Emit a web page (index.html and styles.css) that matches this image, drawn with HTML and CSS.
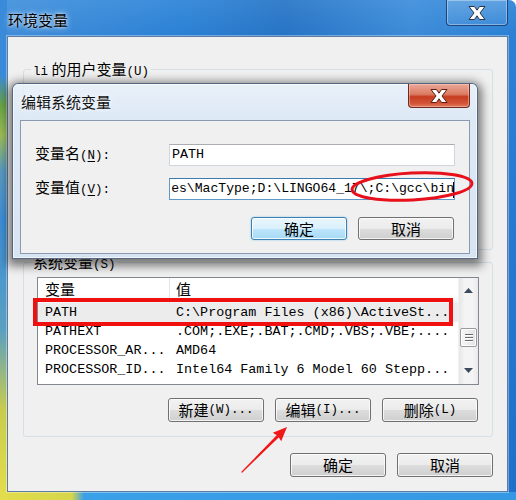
FILE: index.html
```html
<!DOCTYPE html>
<html lang="zh-CN">
<head>
<meta charset="utf-8">
<title>环境变量</title>
<link rel="stylesheet" href="styles.css">
</head>
<body>
<div class="win">
  <div class="titlebar">
    <span class="title">环境变量</span>
    <div class="close glass">
      <svg width="22" height="16" viewBox="0 0 22 16"><path d="M3 1.5 H8.5 L11 5.2 L13.5 1.5 H19 L14 8 L19 14.5 H13.5 L11 10.8 L8.5 14.5 H3 L8 8 Z" fill="#fff" stroke="#2b3440" stroke-width="1" stroke-linejoin="round"/></svg>
    </div>
  </div>
  <div class="client">
    <fieldset class="group user">
      <legend><span class="a">li</span> 的用户变量<span class="a">(U)</span></legend>
      <div class="user-body"></div>
    </fieldset>
    <fieldset class="group sys">
      <legend>系统变量<span class="a">(S)</span></legend>
      <div class="list">
        <div class="table">
          <div class="thead"><div class="c1">变量</div><div class="c2">值</div></div>
          <div class="row sel"><div class="c1">PATH</div><div class="c2">C:\Program Files (x86)\ActiveSt...</div></div>
          <div class="row"><div class="c1">PATHEXT</div><div class="c2">.COM;.EXE;.BAT;.CMD;.VBS;.VBE;....</div></div>
          <div class="row"><div class="c1">PROCESSOR_AR...</div><div class="c2">AMD64</div></div>
          <div class="row"><div class="c1">PROCESSOR_ID...</div><div class="c2">Intel64 Family 6 Model 60 Stepp...</div></div>
        </div>
        <div class="vscroll">
          <div class="arr up"><svg width="9" height="5" viewBox="0 0 9 5"><path d="M0 5 L4.5 0 L9 5 Z" fill="#3c4a5e"/></svg></div>
          <div class="thumb"><span></span><span></span><span></span></div>
          <div class="spacer"></div>
          <div class="arr down"><svg width="9" height="5" viewBox="0 0 9 5"><path d="M0 0 L4.5 5 L9 0 Z" fill="#3c4a5e"/></svg></div>
        </div>
      </div>
      <div class="btnrow">
        <div class="btn">新建<span class="a">(W)...</span></div>
        <div class="btn">编辑<span class="a">(I)...</span></div>
        <div class="btn">删除<span class="a">(L)</span></div>
      </div>
    </fieldset>
    <div class="btnrow bottom">
      <div class="btn">确定</div>
      <div class="btn">取消</div>
    </div>
  </div>

  <div class="dialog">
    <div class="dtitlebar">
      <span class="dtitle">编辑系统变量</span>
      <div class="dclose">
        <svg width="22" height="16" viewBox="0 0 22 16"><path d="M3 1.5 H8.5 L11 5.2 L13.5 1.5 H19 L14 8 L19 14.5 H13.5 L11 10.8 L8.5 14.5 H3 L8 8 Z" fill="#fff" stroke="#5a1e14" stroke-width="1" stroke-linejoin="round"/></svg>
      </div>
    </div>
    <div class="dclient">
      <div class="form">
        <div class="label">变量名<span class="a">(<u>N</u>):</span></div>
        <div class="input"><span class="val">PATH</span></div>
        <div class="label">变量值<span class="a">(<u>V</u>):</span></div>
        <div class="input focus"><span class="val caret">es\MacType;D:\LINGO64_17\;C:\gcc\bin</span></div>
      </div>
      <div class="btnrow dbtns">
        <div class="btn def">确定</div>
        <div class="btn">取消</div>
      </div>
    </div>
  </div>

  <svg class="marks" width="516" height="500" viewBox="0 0 516 500">
    <ellipse cx="412" cy="186.5" rx="60" ry="13.5" fill="none" stroke="#e8101a" stroke-width="3" transform="rotate(-3 412 186.5)"/>
    <rect x="35" y="300" width="416" height="24" fill="none" stroke="#f01010" stroke-width="4"/>
    <path d="M242 472 L278.5 434.2 L279.8 435.5 Z" fill="#f01818" stroke="#f01818" stroke-width="1.2" stroke-linejoin="round"/>
    <path d="M287 427 L281.2 441.2 L278 436 L272.8 432.8 Z" fill="#f01818"/>
  </svg>
</div>
</body>
</html>
```

FILE: styles.css
```css
* { box-sizing: border-box; }
html, body { margin: 0; padding: 0; }
body {
  width: 516px;
  height: 500px;
  overflow: hidden;
  background: #ffffff;
  font-family: "Noto Sans CJK SC", "Noto Sans", sans-serif;
  font-size: 15px;
  color: #000;
}
.a { font-family: "Liberation Mono", "DejaVu Sans Mono", monospace; font-size: 12.5px; }
u { text-decoration: underline; text-underline-offset: 2px; }

.win {
  position: relative;
  width: 516px;
  height: 500px;
  display: flex;
  flex-direction: column;
  padding: 0 8px 8px 7px;
  border-radius: 0 7px 0 0;
  background:
    linear-gradient(180deg, #3a8ada 0, #3a8ada 75px, #6aa548 105px, #9dbe55 135px, #5c9bc0 170px, #3d8fd8 220px, #5aa0c0 330px, #c9cc4c 410px, #e4de4c 500px) left top / 7px 100% no-repeat,
    linear-gradient(90deg, #e2dc4a 0, #d6d64c 72px, #3aa0e8 84px, #3598e4 100%) left bottom / 100% 8px no-repeat,
    linear-gradient(90deg, rgba(255,255,255,.10), rgba(255,255,255,0) 35%, rgba(0,0,60,.10) 55%, rgba(255,255,255,.08) 80%, rgba(255,255,255,0)),
    linear-gradient(180deg, #3b8ddb 0, #2b80d4 36px, #1f6fc9 100%);
}

.titlebar {
  height: 36px;
  flex: none;
  display: flex;
  justify-content: space-between;
  align-items: flex-start;
}
.title {
  padding: 10px 0 0 1px;
  line-height: 20px;
  font-size: 15px;
  color: #000;
  text-shadow: 0 0 6px rgba(255,255,255,.9), 0 0 3px rgba(255,255,255,.7);
}
.close {
  width: 62px;
  height: 26px;
  display: flex;
  align-items: center;
  justify-content: center;
  border: 1px solid rgba(12,40,90,.75);
  border-top: none;
  border-radius: 0 0 4px 4px;
  background: linear-gradient(180deg, rgba(255,255,255,.18), rgba(255,255,255,.06));
  box-shadow: inset 0 0 0 1px rgba(255,255,255,.35);
}

.client {
  flex: 1;
  display: flex;
  flex-direction: column;
  background: #f0f0f0;
  border: 1px solid #5d7ca3;
  box-shadow: 0 0 0 1px rgba(255,255,255,.35);
  padding: 22px 14px 14px 15px;
}

.group {
  margin: 0;
  padding: 0 13px;
  border: 1px solid #d5dfe5;
  border-radius: 3px;
  min-width: 0;
}
.group legend {
  margin-left: -6px;
  padding: 0 2px;
  line-height: 20px;
  height: 20px;
}
.user-body { height: 170px; }
.sys { margin-top: 2px; padding-top: 5px; padding-bottom: 14px; }

.list {
  height: 108px;
  display: flex;
  border: 1px solid #828790;
  background: #fff;
}
.table { flex: 1; min-width: 0; }
.thead {
  height: 25px;
  display: flex;
  background: linear-gradient(180deg, #ffffff 0, #ffffff 60%, #f3f4f6 100%);
}
.thead .c1 { border-right: 1px solid #e3e5e8; }
.thead .c1, .thead .c2 { line-height: 22px; }
.c1 { width: 132px; flex: none; padding-left: 7px; white-space: nowrap; overflow: hidden; }
.c2 { flex: 1; padding-left: 6px; white-space: nowrap; overflow: hidden; }
.row {
  height: 19px;
  display: flex;
  line-height: 19px;
  font-family: "Liberation Mono", "DejaVu Sans Mono", monospace;
  font-size: 13.4px;
}
.row.sel { background: #ececec; }

.vscroll {
  width: 20px;
  flex: none;
  display: flex;
  flex-direction: column;
  align-items: center;
  background: linear-gradient(90deg, #e6e6e6, #f4f4f4 30%, #f4f4f4 70%, #e9e9e9);
  border-left: 1px solid #f0f0f0;
}
.arr { height: 24px; width: 100%; display: flex; align-items: center; justify-content: center; }
.arr.down { height: 22px; align-items: flex-start; padding-top: 6px; }
.thumb {
  margin-top: 26px;
  width: 17px;
  height: 19px;
  border: 1px solid #9a9a9a;
  border-radius: 2px;
  background: linear-gradient(90deg, #f6f6f6, #e2e2e2);
  box-shadow: inset 0 0 0 1px #fdfdfd;
  display: flex;
  flex-direction: column;
  align-items: center;
  justify-content: center;
  gap: 2px;
}
.thumb span { width: 8px; height: 1px; background: #6a6a6a; box-shadow: 0 1px 0 #fff; }
.spacer { flex: 1; }

.btnrow {
  display: flex;
  justify-content: flex-end;
  gap: 11px;
  margin-top: 13px;
}
.sys .btnrow { margin-right: 1px; }
.bottom { margin-top: 16px; }
.btn {
  width: 96px;
  height: 24px;
  display: flex;
  align-items: center;
  justify-content: center;
  border: 1px solid #707070;
  border-radius: 3px;
  background: linear-gradient(180deg, #f2f2f2 0, #ebebeb 50%, #dddddd 51%, #cfcfcf 100%);
  box-shadow: inset 0 0 0 1px rgba(255,255,255,.75);
  font-size: 15px;
  line-height: 20px;
}
.btn.def {
  border-color: #3c7fb1;
  background: linear-gradient(180deg, #eaf6fd 0, #d9f0fc 50%, #bee6fd 51%, #a7d9f5 100%);
  box-shadow: inset 0 0 0 1px rgba(255,255,255,.8), 0 0 2px #7fc3ea;
}

.dialog {
  position: absolute;
  left: 12px;
  top: 83px;
  width: 466px;
  height: 176px;
  display: flex;
  flex-direction: column;
  padding: 0 7px 6px 7px;
  border: 1px solid rgba(40,60,90,.75);
  border-radius: 6px 6px 0 0;
  background: linear-gradient(180deg, rgba(232,240,249,.97) 0, rgba(220,232,245,.97) 36px, rgba(214,227,241,.97) 100%);
  box-shadow: 0 3px 10px 4px rgba(0,0,0,.5), inset 0 0 0 1px rgba(255,255,255,.6);
}
.dtitlebar {
  height: 36px;
  flex: none;
  display: flex;
  justify-content: space-between;
  align-items: flex-start;
}
.dtitle {
  padding: 8px 0 0 1px;
  line-height: 20px;
  font-size: 15px;
  color: #111;
  text-shadow: 0 0 6px rgba(255,255,255,1);
}
.dclose {
  width: 62px;
  height: 24px;
  display: flex;
  align-items: center;
  justify-content: center;
  border: 1px solid #6d2a1e;
  border-top: none;
  border-radius: 0 0 4px 4px;
  background: linear-gradient(180deg, #eba898 0, #db7a62 45%, #c63c20 55%, #d3553a 85%, #e27a5a 100%);
  box-shadow: inset 0 0 0 1px rgba(255,210,200,.45);
}
.dclient {
  flex: 1;
  border: 1px solid #8a9bb0;
  background: #f0f0f0;
  padding: 22px 14px 13px 14px;
}
.form {
  display: grid;
  grid-template-columns: 134px 1fr;
  row-gap: 11px;
  align-items: center;
}
.label { line-height: 20px; }
.input {
  height: 22px;
  display: flex;
  align-items: center;
  overflow: hidden;
  white-space: nowrap;
  background: #fff;
  border: 1px solid #d0d6de;
  border-top-color: #abadb3;
  padding-left: 2px;
  font-family: "Liberation Mono", "DejaVu Sans Mono", monospace;
  font-size: 13.4px;
}
.input.focus {
  justify-content: flex-end;
  border-color: #5d98c8;
  border-top-color: #3d7bad;
  padding-left: 0;
  font-size: 13.1px;
}
.val { flex: none; }
.caret { position: relative; padding-right: 0; }
.caret::after {
  content: "";
  position: absolute;
  right: 0;
  top: 1px;
  width: 1px;
  height: 16px;
  background: #000;
}
.dbtns { margin-top: 17px; margin-right: 1px; }
.dbtns .btn { height: 23px; }

.marks {
  position: absolute;
  left: 0;
  top: 0;
  pointer-events: none;
}
```
